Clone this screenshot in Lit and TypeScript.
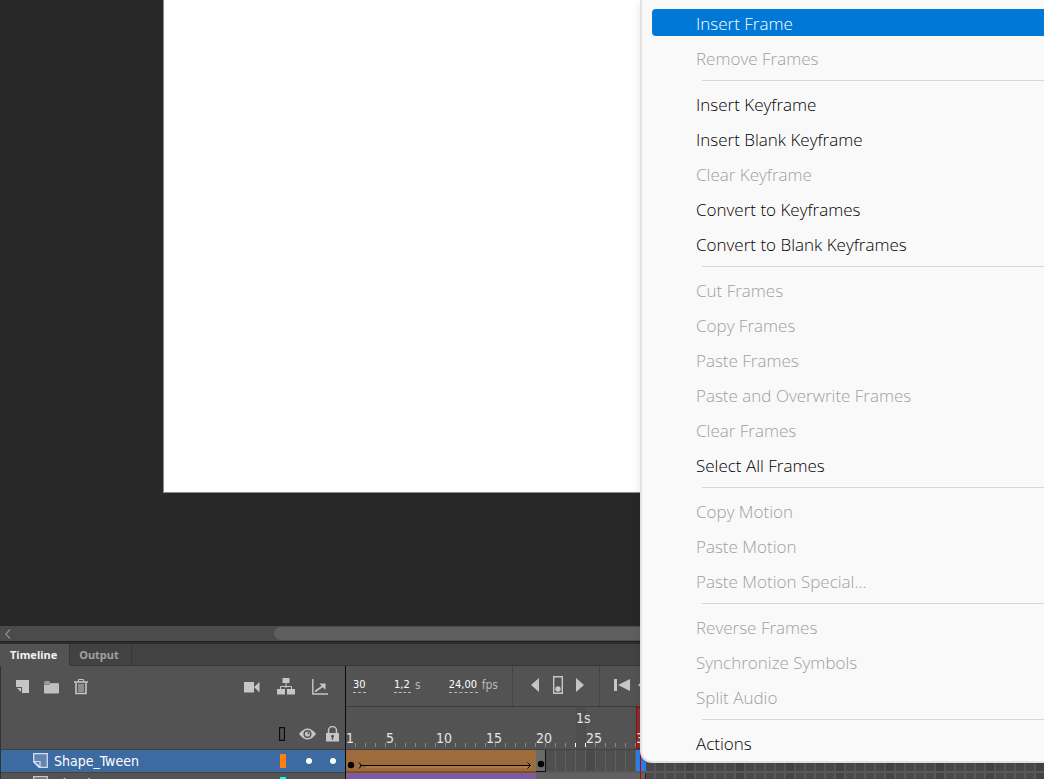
import { LitElement, html, css, svg } from "lit";
import { customElement, property } from "lit/decorators.js";
import { classMap } from "lit/directives/class-map.js";

const icons: Record<string, unknown> = {
  layer: svg`<svg width="14" height="14" viewBox="0 0 14 14"><path d="M0 0h13v13H6V7H0z" fill="#c6c6c6"/><path d="M1 8h4v4z" fill="#c6c6c6"/></svg>`,
  folder: svg`<svg width="16" height="14" viewBox="0 0 16 14"><path d="M0 2.500Q0 1 1.500 1H5l1.500 2H15v1H0z" fill="#9a9a9a"/><path d="M0 4.500h5.500L7 3.500h7.500q.5 0 .5.5v8.500q0 1-1 1H1q-1 0-1-1z" fill="#c0c0c0"/></svg>`,
  trash: svg`<svg width="14" height="16" viewBox="0 0 14 16" fill="none" stroke="#c6c6c6"><path d="M0 3h14" stroke-width="1.600"/><path d="M4.500 2.500v-2h5v2"/><path d="M2 4v10.500h10V4" stroke-width="1.600"/><path d="M5 5v8M7 5v8M9 5v8"/></svg>`,
  camera: svg`<svg width="16" height="12" viewBox="0 0 16 12" fill="#c6c6c6"><rect y="1" width="10" height="10.500"/><path d="M10 6l5.500-5v10.500z"/></svg>`,
  tree: svg`<svg width="18" height="17" viewBox="0 0 18 17"><path d="M9 5v5M3.500 11V8.500h11V11" fill="none" stroke="#c6c6c6"/><path d="M5.500 0h7v5h-7zM0 11h8v5.500H0zM10 11h8v5.500h-8z" fill="#c6c6c6"/></svg>`,
  graph: svg`<svg width="16" height="16" viewBox="0 0 16 16" fill="none" stroke="#c6c6c6"><path d="M.8 0v15H16" stroke-width="1.400"/><path d="M3 12.500L11 7" stroke-width="1.600"/><path d="M7.500 4.500h6V11z" fill="#c6c6c6" stroke="none"/></svg>`,
  outline: svg`<svg width="14" height="14" viewBox="0 0 14 14"><path d="M4.600.600h4.800v12.800H4.600z" fill="none" stroke="#0c0c0c" stroke-width="1.200"/></svg>`,
  eye: svg`<svg width="17" height="12" viewBox="0 0 17 12"><path d="M0 6Q8.500-5 17 6 8.500 17 0 6z" fill="#c6c6c6"/><circle cx="8.500" cy="6" r="3.300" fill="none" stroke="#535353" stroke-width="1.500"/><circle cx="9.300" cy="5.200" r="1" fill="#535353"/></svg>`,
  lock: svg`<svg width="13" height="16" viewBox="0 0 13 16"><path d="M2.500 8V4.500a4 4 0 0 1 8 0V8" fill="none" stroke="#c6c6c6" stroke-width="1.500"/><rect y="7" width="13" height="8.500" rx=".5" fill="#c6c6c6"/><circle cx="6.500" cy="10.200" r="1.500" fill="#535353"/><path d="M5.900 10h1.200v4H5.900z" fill="#535353"/></svg>`,
  prev: svg`<svg width="8" height="14" viewBox="0 0 8 14"><path d="M8 0v14L0 7z" fill="#c6c6c6"/></svg>`,
  key: svg`<svg width="10" height="18" viewBox="0 0 10 18"><path d="M.7.700h8.600v16.600H.7z" fill="none" stroke="#c6c6c6" stroke-width="1.400"/><circle cx="5" cy="13" r="2.700" fill="#c6c6c6"/></svg>`,
  next: svg`<svg width="8" height="14" viewBox="0 0 8 14"><path d="M0 0v14l8-7z" fill="#c6c6c6"/></svg>`,
  first: svg`<svg width="16" height="12" viewBox="0 0 16 12" fill="#c6c6c6"><path d="M0 0h3v12H0zM16 0v12L4 6z"/></svg>`,
  back: svg`<svg width="14" height="12" viewBox="0 0 14 12" fill="#c6c6c6"><path d="M0 6l5-4v3h8v2H5v3z"/></svg>`,
  page: svg`<svg width="16" height="16" viewBox="0 0 16 16" stroke="currentColor"><path d="M.7.700h13.600v13.600H6L.7 9z" fill="currentColor" fill-opacity=".25" stroke-width="1.300"/><path d="M.7 8.500H7V14z" fill="none" stroke-width="1.200"/></svg>`,
  chevron: svg`<svg width="6" height="10" viewBox="0 0 6 10"><path d="M5 .5L.8 5 5 9.500" fill="none" stroke="#8f8f8f" stroke-width="1.200"/></svg>`,
};

type Entry = { label: string; disabled?: boolean; active?: boolean } | null;
const on = (label: string): Entry => ({ label });
const off = (label: string): Entry => ({ label, disabled: true });

const MENU: Entry[] = [
  { label: "Insert Frame", active: true },
  off("Remove Frames"),
  null,
  on("Insert Keyframe"),
  on("Insert Blank Keyframe"),
  off("Clear Keyframe"),
  on("Convert to Keyframes"),
  on("Convert to Blank Keyframes"),
  null,
  off("Cut Frames"),
  off("Copy Frames"),
  off("Paste Frames"),
  off("Paste and Overwrite Frames"),
  off("Clear Frames"),
  on("Select All Frames"),
  null,
  off("Copy Motion"),
  off("Paste Motion"),
  off("Paste Motion Special..."),
  null,
  off("Reverse Frames"),
  off("Synchronize Symbols"),
  off("Split Audio"),
  null,
  on("Actions"),
];

const FRAME_WIDTH = 10;
const LAYERS_WIDTH = 346;
const frameCount = Math.ceil((window.innerWidth - LAYERS_WIDTH) / FRAME_WIDTH);
const FRAMES = Array.from({ length: frameCount }, (_, i) => i + 1);

@customElement("frame-menu")
export class FrameMenu extends LitElement {
  static styles = css`
    :host {
      display: block;
      padding: 5px 10px 0;
      background: #f9f9f9;
      border: 2px solid #e2e2e2;
      border-top: 0;
      border-radius: 0 0 12px 12px;
      box-shadow: 0 2px 8px rgba(0, 0, 0, 0.1);
    }
    .item {
      display: flex;
      align-items: center;
      width: 100%;
      height: 27px;
      margin: 4px 0;
      padding: 2px 44px 0;
      box-sizing: border-box;
      border: 0;
      border-radius: 4px;
      background: none;
      color: #000;
      font: 350 17px/25px "Segoe UI", "Open Sans", sans-serif;
      text-align: left;
      white-space: nowrap;
    }
    .slot {
      display: flow-root;
      height: 35px;
    }
    .item:disabled {
      color: #a0a0a0;
    }
    .item.active {
      background: #0078d7;
      color: #fff;
    }
    hr {
      height: 1px;
      margin: 5px 0 5px 50px;
      border: 0;
      background: #d6d6d6;
    }
  `;
  render() {
    return html`<div role="menu">
      ${MENU.map((e) =>
        e
          ? html`<div class="slot"><button role="menuitem" class=${classMap({ item: true, active: !!e.active })} ?disabled=${e.disabled}>${e.label}</button></div>`
          : html`<hr />`,
      )}
    </div>`;
  }
}

@customElement("frame-ruler")
export class FrameRuler extends LitElement {
  static styles = css`
    :host {
      display: flex;
      height: 43px;
      overflow: hidden;
      background: #535353;
      border-bottom: 1px solid #414141;
      box-sizing: border-box;
      font: 14px/16px Tahoma, "DejaVu Sans Condensed", sans-serif;
      color: #e4e4e4;
    }
    .frame {
      position: relative;
      display: flex;
      flex: none;
      flex-direction: column;
      justify-content: flex-end;
      width: 10px;
      padding-bottom: 3px;
      box-sizing: border-box;
      white-space: nowrap;
    }
    .frame::after {
      content: "";
      position: absolute;
      right: 0;
      bottom: 2px;
      width: 1px;
      height: 4px;
      background: #8a8a8a;
    }
    .second {
      background: #4e4e4e;
      justify-content: flex-start;
      padding-top: 3px;
    }
    .edge::after {
      background: #fff;
    }
    .head {
      background: #7c3636;
      outline: 1px solid #b00000;
      outline-offset: -1px;
    }
  `;
  render() {
    return FRAMES.map((n) => {
      const second = n % 24 === 0;
      const labelled = n === 1 || (n % 5 === 0 && n + 1 < frameCount);
      const text = second ? `${n / 24}s` : labelled ? n : "";
      return html`<div class=${classMap({ frame: true, second, edge: n === 23 || n === 24, head: n === 30 })}>${text}</div>`;
    });
  }
}

@customElement("frame-row")
export class FrameRow extends LitElement {
  @property() kind = "shape";
  static styles = css`
    :host {
      display: flex;
      height: 23px;
      overflow: hidden;
      background: #5a5a5a;
    }
    .tween {
      display: flex;
      align-items: center;
      flex: none;
      width: 190px;
      height: 23px;
      box-sizing: border-box;
      border-bottom: 2px solid #7a5028;
      background: #9e6b3b;
    }
    .classic {
      border: 0;
      background: #7d5ba0;
    }
    .cell {
      flex: none;
      width: 10px;
      height: 21px;
      box-sizing: border-box;
      border-right: 1px solid #5f5f5f;
      background: #4f4f4f;
    }
    .fifth {
      background: #4a4a4a;
    }
    .cell.key {
      display: flex;
      align-items: flex-end;
      justify-content: center;
      padding-bottom: 3px;
      height: 22px;
      background: #6a6a6a;
      border-right: 1px solid #111;
      border-bottom: 1px solid #111;
    }
    .cell.chosen {
      background: #2a80e8;
      border: 0;
    }
    .empty {
      border-right: 2px solid #585858;
      background: #4a4a4a;
    }
    .empty.fifth {
      background: #444;
    }
    .span {
      flex: none;
      width: 110px;
      box-sizing: border-box;
      border-right: 1px solid #222;
      background: #626262;
    }
  `;
  render() {
    const shape = this.kind === "shape";
    return html`
      <div class=${classMap({ tween: true, classic: !shape })}>
        ${shape
          ? svg`<svg width="190" height="22" viewBox="0 0 190 22"><rect x="20" y="16" width="165" height="2" fill="#b07a48"/><circle cx="5" cy="15" r="3.200"/><path d="M13 12.500L15.500 15.500 13 18.500M14 15.500H185M181.500 12.500l3 3-3 3" fill="none" stroke="#000"/></svg>`
          : ""}
      </div>
      ${shape ? "" : html`<div class="span"></div>`}
      ${FRAMES.slice(shape ? 19 : 30).map(
        (n) => html`<div class=${classMap({ cell: true, fifth: n % 5 === 0, key: n === 20, chosen: n === 30, empty: n > 30 })}>
          ${n === 20 ? svg`<svg width="8" height="8" viewBox="0 0 8 8"><circle cx="4" cy="4" r="3.200"/></svg>` : ""}
        </div>`,
      )}
    `;
  }
}

@customElement("app-root")
export class AppRoot extends LitElement {
  static styles = css`
    :host {
      position: relative;
      display: flex;
      flex-direction: column;
      height: 100vh;
      overflow: hidden;
      background: #2c2c2c;
      font: 13px/16px Tahoma, "DejaVu Sans Condensed", sans-serif;
      color: #e4e4e4;
    }
    button {
      display: flex;
      padding: 0;
      border: 0;
      background: none;
      color: inherit;
      font: inherit;
    }
    .work {
      display: flex;
      flex: 1;
      padding: 0 0 133px 163px;
      background: #282828;
    }
    .canvas {
      flex: 1;
      background: #fff;
      border: solid #8c8c8c;
      border-width: 0 0 1px 1px;
    }
    .scroll {
      display: flex;
      height: 15px;
      align-items: center;
      background: #4b4b4b;
      border-bottom: 1px solid #242424;
    }
    .scroll button {
      flex: none;
      width: 274px;
      padding-left: 5px;
      box-sizing: border-box;
    }
    .thumb {
      flex: 1;
      height: 13px;
      border-radius: 7px 0 0 7px;
      background: #5f5f5f;
    }
    .tabs {
      display: flex;
      height: 22px;
      margin-top: 2px;
      background: #424242;
      font: bold 11px/21px Tahoma, "Noto Sans", sans-serif;
    }
    .tab {
      padding: 0 12px 0 9px;
      border-right: 1px solid #383838;
      border-bottom: 1px solid #383838;
      color: #a0a0a0;
    }
    .current {
      padding: 0 12px 0 10px;
      background: #535353;
      border-bottom-color: #535353;
      color: #f2f2f2;
    }
    .rest {
      flex: 1;
      border-bottom: 1px solid #383838;
    }
    .timeline {
      display: flex;
      height: 113px;
      background: #535353;
    }
    .layers {
      display: flex;
      flex: none;
      flex-direction: column;
      width: 344px;
      border-left: 1px solid #333;
    }
    .tools {
      display: flex;
      flex: none;
      align-items: center;
      justify-content: space-between;
      height: 41px;
      padding: 0 17px 0 15px;
    }
    .set {
      display: flex;
      align-items: center;
      gap: 14px;
    }
    .set.wide {
      gap: 17px;
    }
    .heads {
      display: flex;
      flex: none;
      align-items: center;
      justify-content: flex-end;
      gap: 10px;
      height: 43px;
      padding: 12px 6px 0 0;
      box-sizing: border-box;
      border-bottom: 1px solid #414141;
    }
    .layer {
      display: flex;
      flex: none;
      align-items: center;
      height: 22px;
      padding: 0 9px 0 32px;
      border-bottom: 1px solid #444;
      color: #c6c6c6;
      font-size: 14px;
    }
    .layer .name {
      flex: 1;
      padding-left: 5px;
      color: #e4e4e4;
    }
    .selected {
      background: #3d6aa0;
      color: #d3dceb;
    }
    .selected .name {
      color: #fff;
    }
    .swatch {
      width: 6px;
      height: 14px;
      margin-right: 20px;
      background: var(--swatch);
    }
    .dot {
      width: 6px;
      height: 6px;
      margin-left: 18px;
      border-radius: 3px;
      background: #fff;
    }
    .dot:first-of-type {
      margin-left: 0;
    }
    .frames {
      flex: 1;
      min-width: 0;
      border-left: 1px solid #0a0a0a;
      position: relative;
    }
    .bar {
      display: flex;
      height: 40px;
      overflow: hidden;
      border-bottom: 1px solid #3e3e3e;
    }
    .group {
      display: flex;
      flex: none;
      align-items: center;
      border-right: 1px solid #444;
      box-sizing: border-box;
    }
    .values {
      width: 167px;
      padding: 0 14px 2px 7px;
      font-size: 12px;
      justify-content: space-between;
    }
    .steps {
      width: 87px;
      padding: 0 15px 2px 18px;
      justify-content: space-between;
    }
    .play {
      gap: 8px;
      padding: 0 14px 2px;
    }
    label {
      display: flex;
      align-items: center;
      gap: 4px;
      color: #b8b8b0;
    }
    input {
      padding: 0;
      border: 0;
      border-bottom: 1px dashed #b8b8b8;
      background: none;
      color: #fff;
      font: 11px/14px Tahoma, "DejaVu Sans Condensed", sans-serif;
      height: 15px;
      box-sizing: border-box;
    }
    .w2 {
      width: 13px;
    }
    .w3 {
      width: 17px;
    }
    .w5 {
      width: 29px;
    }
    .playhead {
      position: absolute;
      top: 84px;
      bottom: 0;
      left: 294px;
      width: 1px;
      background: #c00000;
    }
    .menu {
      position: absolute;
      top: 0;
      left: 640px;
      right: -40px;
      padding-bottom: 1px;
    }
  `;

  private icon(name: string, label: string) {
    return html`<button aria-label=${label}>${icons[name]}</button>`;
  }

  render() {
    return html`
      <main class="work"><div class="canvas"></div></main>
      <div class="scroll">${this.icon("chevron", "Scroll left")}<div class="thumb"></div></div>
      <div class="tabs" role="tablist">
        <button class="tab current" role="tab" aria-selected="true">Timeline</button>
        <button class="tab" role="tab" aria-selected="false">Output</button>
        <div class="rest"></div>
      </div>
      <section class="timeline">
        <div class="layers">
          <div class="tools">
            <div class="set">
              ${this.icon("layer", "New layer")} ${this.icon("folder", "New folder")} ${this.icon("trash", "Delete")}
            </div>
            <div class="set wide">
              ${this.icon("camera", "Add camera")} ${this.icon("tree", "Layer parenting")} ${this.icon("graph", "Layer depth")}
            </div>
          </div>
          <div class="heads">
            ${this.icon("outline", "Outlines")} ${this.icon("eye", "Visibility")} ${this.icon("lock", "Lock")}
          </div>
          <div class="layer selected">
            ${icons.page}<span class="name">Shape_Tween</span>
            <div class="swatch" style="--swatch:#ff8010"></div>
            <i class="dot"></i><i class="dot"></i>
          </div>
          <div class="layer">
            ${icons.page}<span class="name">Classic_Tween</span>
            <div class="swatch" style="--swatch:#00ffff"></div>
            <i class="dot"></i><i class="dot"></i>
          </div>
        </div>
        <div class="frames">
          <div class="bar">
            <div class="group values">
              <label><input class="w2" value="30" aria-label="Current frame" /></label>
              <label><input class="w3" value="1,2" />s</label>
              <label><input class="w5" value="24,00" />fps</label>
            </div>
            <div class="group steps">
              ${this.icon("prev", "Previous keyframe")} ${this.icon("key", "Insert keyframe")} ${this.icon("next", "Next keyframe")}
            </div>
            <div class="group play">${this.icon("first", "Go to first frame")} ${this.icon("back", "Step back")}</div>
          </div>
          <frame-ruler></frame-ruler>
          <frame-row kind="shape"></frame-row>
          <frame-row kind="classic"></frame-row>
          <div class="playhead"></div>
        </div>
      </section>
      <frame-menu class="menu"></frame-menu>
    `;
  }
}
